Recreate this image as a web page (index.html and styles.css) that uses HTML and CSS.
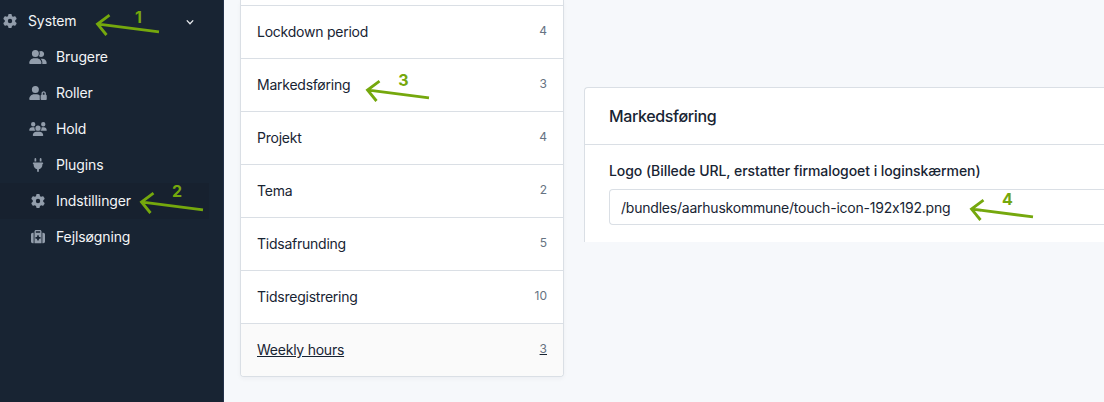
FILE: index.html
```html
<!DOCTYPE html>
<html lang="da">
<head>
<meta charset="utf-8">
<title>Indstillinger</title>
<link rel="stylesheet" href="styles.css">
</head>
<body>
<div class="page">
  <nav class="sidebar">
    <a class="nav-item nav-parent">
      <svg class="icon" viewBox="0 0 512 512"><path id="gear" d="M495.900 166.600c3.200 8.700 .5 18.400-6.400 24.600l-43.300 39.400c1.100 8.300 1.700 16.800 1.700 25.400s-.6 17.100-1.700 25.400l43.300 39.400c6.900 6.200 9.600 15.900 6.400 24.600c-4.400 11.900-9.700 23.300-15.800 34.300l-4.700 8.100c-6.600 11-14 21.400-22.100 31.200c-5.900 7.200-15.700 9.600-24.500 6.800l-55.700-17.700c-13.400 10.300-28.200 18.900-44 25.400l-12.500 57.100c-2 9.100-9 16.300-18.200 17.800c-13.800 2.300-28 3.500-42.500 3.500s-28.700-1.200-42.500-3.500c-9.200-1.500-16.200-8.700-18.200-17.800l-12.500-57.100c-15.800-6.500-30.600-15.100-44-25.400L83.100 425.900c-8.800 2.800-18.600 .3-24.500-6.800c-8.100-9.800-15.500-20.200-22.100-31.200l-4.700-8.100c-6.100-11-11.400-22.400-15.800-34.300c-3.200-8.700-.5-18.400 6.400-24.600l43.300-39.400C64.600 273.100 64 264.600 64 256s.6-17.100 1.700-25.400L22.400 191.200c-6.900-6.200-9.600-15.900-6.400-24.600c4.400-11.900 9.700-23.300 15.800-34.300l4.700-8.100c6.600-11 14-21.400 22.100-31.200c5.900-7.200 15.700-9.600 24.500-6.800l55.700 17.700c13.400-10.300 28.200-18.900 44-25.400l12.500-57.100c2-9.100 9-16.300 18.200-17.800C227.300 1.200 241.500 0 256 0s28.700 1.200 42.500 3.500c9.200 1.500 16.200 8.700 18.200 17.800l12.500 57.100c15.800 6.500 30.600 15.100 44 25.400l55.700-17.700c8.800-2.800 18.600-.3 24.500 6.800c8.100 9.800 15.500 20.200 22.100 31.200l4.700 8.100c6.100 11 11.400 22.400 15.800 34.300zM256 336a80 80 0 1 0 0-160 80 80 0 1 0 0 160z"/></svg>
      <span class="nav-title">System</span>
      <svg class="chevron" viewBox="0 0 10 10"><path d="M1.800 3.400 5 6.700 8.200 3.400"/></svg>
    </a>
    <a class="nav-item">
      <svg class="icon" viewBox="0 0 640 512"><path d="M96 128a128 128 0 1 1 256 0A128 128 0 1 1 96 128zM0 482.300C0 383.800 79.800 304 178.300 304h91.400C368.200 304 448 383.800 448 482.300c0 16.400-13.300 29.700-29.700 29.700H29.700C13.300 512 0 498.700 0 482.300zM609.300 512H471.400c5.400-9.400 8.600-20.300 8.600-32v-8c0-60.700-27.100-115.200-69.800-151.800c2.400-.1 4.700-.2 7.100-.2h61.400C567.800 320 640 392.200 640 481.300c0 17-13.800 30.700-30.700 30.700zM432 256c-31 0-59-12.600-79.300-32.900C372.400 196.500 384 163.600 384 128c0-26.800-6.600-52.100-18.300-74.300C384.300 40.100 407.200 32 432 32c61.900 0 112 50.100 112 112s-50.100 112-112 112z"/></svg>
      <span>Brugere</span>
    </a>
    <a class="nav-item">
      <svg class="icon" viewBox="0 0 640 512"><path d="M224 256A128 128 0 1 0 224 0a128 128 0 1 0 0 256zm-45.700 48C79.800 304 0 383.800 0 482.300C0 498.700 13.300 512 29.700 512H392.600c-5.400-9.400-8.600-20.300-8.600-32V352c0-2.100 .1-4.200 .3-6.300c-31-26-71-41.700-114.600-41.700H178.300zM528 240c17.700 0 32 14.300 32 32v48H496V272c0-17.700 14.300-32 32-32zm-80 32v48c-17.700 0-32 14.300-32 32V480c0 17.700 14.300 32 32 32H608c17.700 0 32-14.300 32-32V352c0-17.700-14.300-32-32-32V272c0-44.200-35.800-80-80-80s-80 35.800-80 80z"/></svg>
      <span>Roller</span>
    </a>
    <a class="nav-item">
      <svg class="icon" viewBox="0 0 640 512"><path d="M144 0a80 80 0 1 1 0 160A80 80 0 1 1 144 0zM512 0a80 80 0 1 1 0 160A80 80 0 1 1 512 0zM0 298.700C0 239.800 47.800 192 106.700 192h42.700c15.900 0 31 3.500 44.600 9.700c-1.300 7.200-1.900 14.700-1.900 22.300c0 38.200 16.800 72.500 43.300 96H21.300C9.600 320 0 310.400 0 298.700zM405.300 320c26.600-23.500 43.300-57.800 43.300-96c0-7.600-.7-15-1.900-22.300c13.600-6.300 28.700-9.700 44.600-9.700h42.700C592.200 192 640 239.800 640 298.700c0 11.800-9.600 21.300-21.300 21.300H405.300zM224 224a96 96 0 1 1 192 0 96 96 0 1 1-192 0zM128 485.300C128 411.700 187.700 352 261.300 352H378.700C452.300 352 512 411.700 512 485.300c0 14.700-11.900 26.700-26.700 26.700H154.700c-14.700 0-26.700-11.900-26.700-26.700z"/></svg>
      <span>Hold</span>
    </a>
    <a class="nav-item">
      <svg class="icon" viewBox="0 0 384 512"><path d="M96 0C78.300 0 64 14.300 64 32v96h64V32c0-17.700-14.300-32-32-32zM288 0c-17.700 0-32 14.300-32 32v96h64V32c0-17.700-14.300-32-32-32zM32 160c-17.700 0-32 14.300-32 32s14.300 32 32 32v32c0 77.400 55 142 128 156.800V480c0 17.700 14.300 32 32 32s32-14.300 32-32V412.800C297 398 352 333.400 352 256V224c17.700 0 32-14.300 32-32s-14.300-32-32-32H32z"/></svg>
      <span>Plugins</span>
    </a>
    <a class="nav-item nav-active">
      <svg class="icon" viewBox="0 0 512 512"><use href="#gear"/></svg>
      <span>Indstillinger</span>
    </a>
    <a class="nav-item">
      <svg class="icon" viewBox="0 0 512 512"><path d="M184 48H328c4.400 0 8 3.600 8 8V96H176V56c0-4.400 3.600-8 8-8zm-56 8V96v32V480H384V128 96 56c0-30.900-25.100-56-56-56H184c-30.900 0-56 25.100-56 56zM96 96H64C28.700 96 0 124.700 0 160V416c0 35.300 28.700 64 64 64H96V96zM416 480h32c35.300 0 64-28.700 64-64V160c0-35.300-28.700-64-64-64H416V480zM224 208c0-8.800 7.200-16 16-16h32c8.800 0 16 7.200 16 16v48h48c8.800 0 16 7.200 16 16v32c0 8.800-7.200 16-16 16H288v48c0 8.800-7.200 16-16 16H240c-8.800 0-16-7.200-16-16V320H176c-8.800 0-16-7.200-16-16V272c0-8.800 7.200-16 16-16h48V208z"/></svg>
      <span>Fejlsøgning</span>
    </a>
  </nav>

  <main class="content">
    <div class="list">
      <a class="row"><span>Lockdown period</span><small>4</small></a>
      <a class="row"><span>Markedsføring</span><small>3</small></a>
      <a class="row"><span>Projekt</span><small>4</small></a>
      <a class="row"><span>Tema</span><small>2</small></a>
      <a class="row"><span>Tidsafrunding</span><small>5</small></a>
      <a class="row"><span>Tidsregistrering</span><small>10</small></a>
      <a class="row row-hover"><span>Weekly hours</span><small>3</small></a>
    </div>
    <section class="card">
      <h3 class="card-header">Markedsføring</h3>
      <div class="card-body">
        <label class="label" for="logo">Logo (Billede URL, erstatter firmalogoet i loginskærmen)</label>
        <input class="input" id="logo" type="text" value="/bundles/aarhuskommune/touch-icon-192x192.png">
      </div>
    </section>
  </main>

  <svg class="annotations" viewBox="0 0 1104 402">
    <defs><path id="arrow" d="M61.500 7.900 1 .2M12-8.800 0 0 9 11"/></defs>
    <use href="#arrow" x="97.500" y="24"/><text x="138.500" y="23">1</text>
    <use href="#arrow" x="141.500" y="202"/><text x="177" y="197">2</text>
    <use href="#arrow" x="367.500" y="90"/><text x="403.300" y="86">3</text>
    <use href="#arrow" x="971.500" y="209"/><text x="1007.500" y="205">4</text>
  </svg>
</div>
</body>
</html>
```
FILE: styles.css
```css
* { box-sizing: border-box; }

body {
  margin: 0;
  background: #f6f8fb;
  color: #182433;
  font: 14px/20px Inter, "Liberation Sans", sans-serif;
  font-feature-settings: "calt" 0;
}

.page {
  position: relative;
  display: flex;
  height: 402px;
  overflow: hidden;
}

.sidebar {
  flex: none;
  width: 224px;
  padding-top: 3px;
  background: #182433;
  border-right: 1px solid #24324a;
  letter-spacing: -0.11px;
}

.nav-item {
  display: flex;
  align-items: center;
  gap: 8px;
  width: 209px;
  height: 36px;
  padding-left: 28px;
  color: #f3f5f7;
}

.nav-parent { padding: 0 14px 0 0; }
.nav-title { flex: 1; }
.nav-active { background: #17212f; }

.icon {
  width: 20px;
  height: 14px;
  fill: #929dab;
}

.chevron {
  width: 10px;
  height: 10px;
  margin-top: 1px;
  fill: none;
  stroke: #e8ebef;
  stroke-width: 1.3;
}

.content {
  flex: 1;
  display: flex;
  align-items: flex-start;
  gap: 20px;
  min-width: 0;
  padding-left: 16px;
}

.list {
  flex: none;
  width: 324px;
  padding-top: 5px;
  background: #fff;
  border: 1px solid #dadfe5;
  border-top: 0;
  border-radius: 0 0 4px 4px;
  box-shadow: 0 2px 4px rgba(24, 36, 51, 0.04);
  overflow: hidden;
  letter-spacing: -0.24px;
}

.row {
  display: flex;
  align-items: center;
  justify-content: space-between;
  height: 53px;
  padding: 0 16px;
  border-top: 1px solid #dadfe5;
}

.row small {
  font-size: 12px;
  line-height: 18px;
  padding-bottom: 2px;
  color: #667382;
  letter-spacing: 0;
}

.row-hover { background: #fafafa; }
.row-hover span, .row-hover small { text-decoration: underline #182433; }

.card {
  flex: 1;
  height: 155px;
  margin-top: 87px;
  background: #fff;
  border: 1px solid #dadfe5;
  border-width: 1px 0 0 1px;
  border-radius: 4px 0 0 0;
}

.card-header {
  height: 57px;
  margin: 0;
  padding: 16px 24px;
  border-bottom: 1px solid #dadfe5;
  font-size: 16px;
  line-height: 24px;
  font-weight: 500;
  letter-spacing: -0.36px;
}

.card-body { padding: 16px 0 0 24px; }

.label {
  display: block;
  margin-bottom: 8px;
  font-weight: 500;
  letter-spacing: -0.065px;
}

.input {
  display: block;
  width: 100%;
  height: 36px;
  padding: 0 11px;
  border: 1px solid #dadfe5;
  border-right: 0;
  border-radius: 4px 0 0 4px;
  background: #fff;
  color: #182433;
  font: inherit;
  font-feature-settings: inherit;
  letter-spacing: -0.22px;
}

.annotations {
  position: absolute;
  top: 0;
  left: 0;
  width: 1104px;
  height: 402px;
  fill: none;
  stroke: #75a80d;
  stroke-width: 2.8;
}

.annotations text {
  fill: #75a80d;
  stroke: none;
  font-size: 16px;
  font-weight: 700;
  text-anchor: middle;
}
```
